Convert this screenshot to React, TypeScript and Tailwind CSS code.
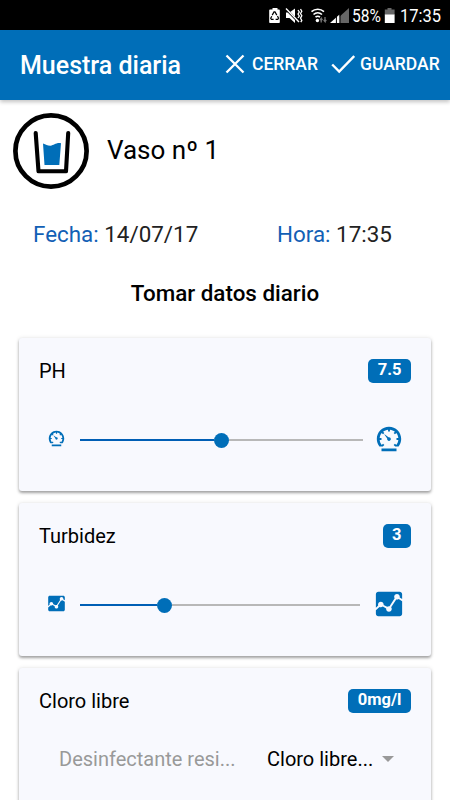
import React from 'react';
import { IoMdSpeedometer, IoMdAnalytics } from 'react-icons/io';

function StatusBar() {
  return (
    <div className="flex h-[30px] items-center bg-black pl-[268px] text-white">
      <svg width="84" height="30" viewBox="0 0 84 30" className="shrink-0">
        <path d="M3 9.500h1.500V8h5v1.500H11a.8.8 0 0 1 .8.8v11.900a.8.8 0 0 1-.8.8H2a.8.8 0 0 1-.8-.8V10.300a.8.8 0 0 1 .8-.8z" fill="#fff" />
        <path d="M4.200 15.100 6 11.900h1l1.800 3.200M9.500 16l1 2.200-.7 1.100H7.600M5.600 19.300H3.400l-.7-1.100 1.100-2" fill="none" stroke="#000" strokeWidth="1.200" />
        <path d="M18 12.500h3.500l5.500-4V23l-5.500-5H18z" fill="#fff" />
        <path d="m17.500 8.500 13.500 14" stroke="#000" strokeWidth="2.400" />
        <path d="m18 8.500 13 13.500" stroke="#fff" strokeWidth="1.400" />
        <path d="m30 10 1.300 2-1.300 2 1.300 2-1.300 2M32.500 9l1.300 2.200-1.300 2.300 1.300 2.300-1.300 2.300 1.300 2.300-1 1.700" fill="none" stroke="#fff" strokeWidth="1.300" />
        <g fill="none" stroke="#fff" strokeWidth="1.600">
          <path d="M43.500 11.700c3.500-3.200 9-3.200 12.500 0M45.500 14.500c2.500-2.300 6-2.300 8.500 0M47.500 17.200c1.500-1.300 3-1.300 4.500 0" />
        </g>
        <circle cx="49.400" cy="20.500" r="1.700" fill="#fff" />
        <path d="M53.200 22.500v-4l-1.200 1.500M53.200 18.500l1.300 1.500M57 17v4.500l-1.300-1.500M57 21.500l1.300-1.500" fill="none" stroke="#777" strokeWidth="1.300" />
        <path d="M64.500 23 81 8v15z" fill="#666" />
        <path d="M62 23 71.500 14.500V23z" fill="#fff" />
        <path d="M68.400 14v9M72 12v11" stroke="#000" strokeWidth="1" />
      </svg>
      <span className="w-[30px] origin-left scale-x-[.84] whitespace-nowrap pt-[2px] text-[18.500px] leading-[30px]">58%</span>
      <svg width="12" height="30" viewBox="0 0 12 30" className="ml-[2px] shrink-0">
        <path d="M3.500 8h4v1.500H10.600V15H.8V9.500h2.700z" fill="#666" />
        <path d="M.8 14.500h9.800V23H.8z" fill="#fff" />
      </svg>
      <span className="ml-[4px] origin-left scale-x-[.89] whitespace-nowrap pt-[2px] text-[18.500px] leading-[30px]">17:35</span>
    </div>
  );
}

function Header() {
  return (
    <header className="relative flex h-[70px] items-center bg-[#006eb8] pl-5 font-medium text-white shadow-[0_2px_4px_rgba(0,0,0,.24)]">
      <h1 className="w-[204px] whitespace-nowrap pt-px text-[25px] leading-7">Muestra diaria</h1>
      <button className="flex w-[107px] items-center gap-[7px] pb-[2px] text-[17.500px] leading-6">
        <svg width="21" height="20" viewBox="0 0 21 20" className="shrink-0">
          <path d="m2.500 1.500 17 17m0-17-17 17" stroke="#fff" strokeWidth="2.300" />
        </svg>
        CERRAR
      </button>
      <button className="flex items-center gap-[5px] pb-[2px] text-[17.500px] leading-6">
        <svg width="24" height="20" viewBox="0 0 24 20" className="shrink-0">
          <path d="m1.200 10.500 7 7L23.200 2" fill="none" stroke="#fff" strokeWidth="2.400" />
        </svg>
        GUARDAR
      </button>
    </header>
  );
}

function Glass() {
  return (
    <svg width="76" height="78" viewBox="0 0 76 78" className="shrink-0">
      <circle cx="38" cy="39" r="35.600" fill="#fff" stroke="#000" strokeWidth="4.700" />
      <path d="m22.700 21 2.800 38.300h27.500L55.200 21" fill="none" stroke="#000" strokeWidth="4.100" strokeLinecap="round" strokeLinejoin="round" />
      <path d="M30 31.500c3 1 4.500 2.300 7.500 2.200 3.500-.2 5-3.200 10.500-2.500l-1.700 21.800H31.500z" fill="#006eb8" />
    </svg>
  );
}

function Badge({ children }: { children: React.ReactNode }) {
  return (
    <span className="flex h-[24px] items-center rounded-[5px] bg-[#006eb8] px-[9.500px] pb-px text-[16.500px] font-bold leading-5 text-white">
      {children}
    </span>
  );
}

function Card({ title, value, children }: { title: string; value: string; children: React.ReactNode }) {
  return (
    <section className="h-[153px] rounded-[3px] bg-[#f8f9fe] px-5 pt-5 shadow-[0_2px_3px_rgba(0,0,0,.34),0_0_4px_rgba(0,0,0,.1)]">
      <div className="flex h-[25px] items-center justify-between">
        <h3 className="text-[20px] leading-6">{title}</h3>
        <Badge>{value}</Badge>
      </div>
      {children}
    </section>
  );
}

function Slider({ icon: Icon, percent, end }: { icon: React.ComponentType<{ size?: number; className?: string }>; percent: number; end: number }) {
  return (
    <div className="mt-[37px] flex h-10 items-center text-[#006eb8]">
      <div className="flex w-[41px] pb-[4px] pl-[8px]">
        <Icon size={19} className="shrink-0" />
      </div>
      <div className="flex items-center" style={{ width: end - 80 }}>
        <div className="h-[2.500px] bg-[#005fb5]" style={{ width: `calc(${percent}% - 7.500px)` }} />
        <div className="size-[15px] shrink-0 rounded-full bg-[#006eb8]" />
        <div className="h-[2.500px] flex-1 bg-[#b8b8b8]" />
      </div>
      <div className="flex flex-1 justify-end pr-[7.500px] pb-[2px]">
        <Icon size={30} className="shrink-0" />
      </div>
    </div>
  );
}

export default function App() {
  return (
    <div className="h-[800px] w-[450px] overflow-hidden bg-white font-[Roboto,sans-serif] text-black">
      <StatusBar />
      <Header />
      <div className="flex h-[102px] items-center gap-[18px] pl-[13px]">
        <Glass />
        <h2 className="pb-[2px] text-[26px] leading-8">Vaso nº 1</h2>
      </div>
      <div className="flex h-[66px] items-center pb-[2px] pl-[33px] text-[22.400px] leading-7 text-[#222]">
        <p className="w-[244px]"><span className="text-[#1260b5]">Fecha:</span> 14/07/17</p>
        <p><span className="text-[#1260b5]">Hora:</span> 17:35</p>
      </div>
      <h2 className="flex h-[70px] items-start justify-center pt-[11px] text-[22.400px] font-medium leading-7">Tomar datos diario</h2>
      <main className="flex flex-col gap-3 px-[19px]">
        <Card title="PH" value="7.5"><Slider icon={IoMdSpeedometer} percent={50} end={363} /></Card>
        <Card title="Turbidez" value="3"><Slider icon={IoMdAnalytics} percent={30.300} end={360} /></Card>
        <Card title="Cloro libre" value="0mg/l">
          <div className="mt-[34px] flex items-center pl-5 text-[20px] leading-6">
            <span className="w-[208px] text-[#999]">Desinfectante resi...</span>
            <span className="w-[115px] whitespace-nowrap">Cloro libre...</span>
            <span className="border-x-[6.500px] border-t-[6px] border-x-transparent border-t-[#999]" />
          </div>
        </Card>
      </main>
    </div>
  );
}
